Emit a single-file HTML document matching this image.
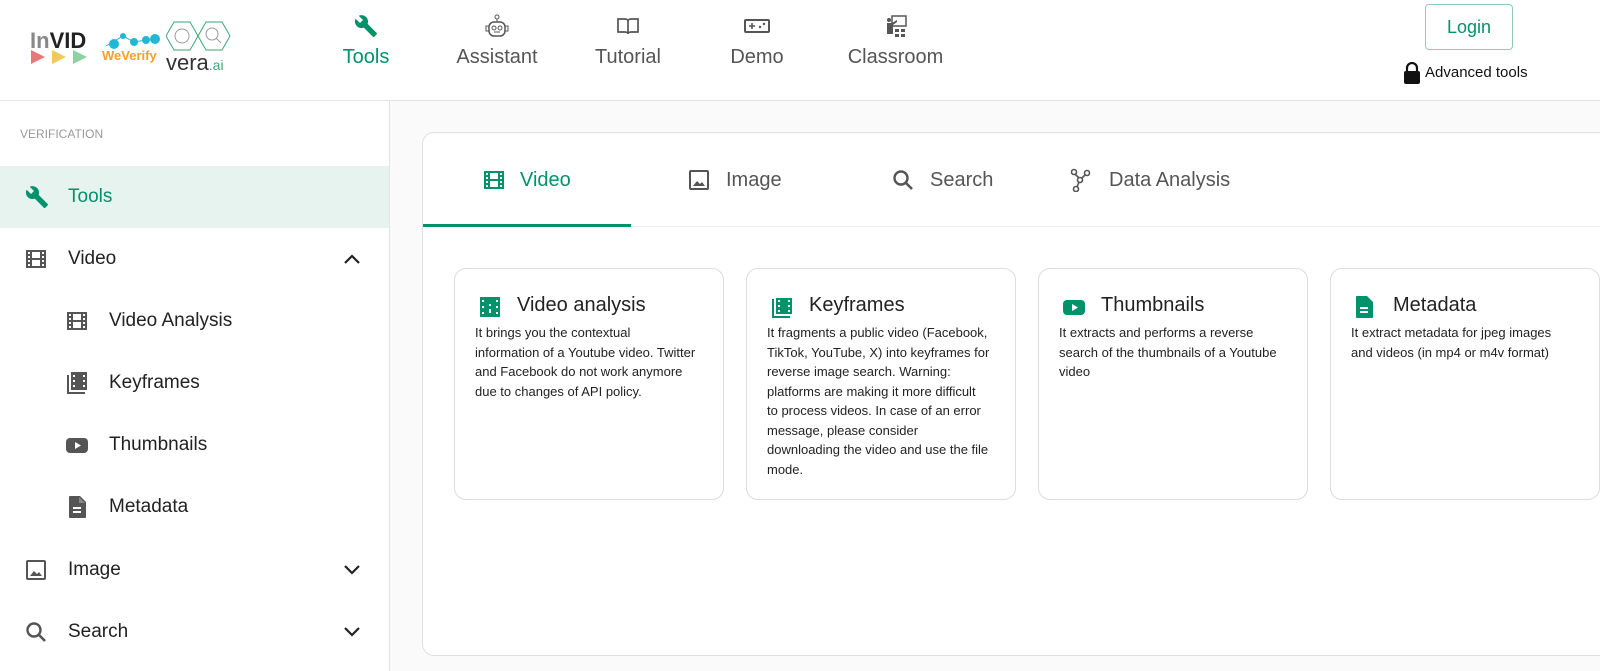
<!DOCTYPE html>
<html><head><meta charset="utf-8"><style>
*{box-sizing:border-box;margin:0;padding:0}
body{width:1600px;height:671px;overflow:hidden;font-family:"Liberation Sans",sans-serif;background:#fafafa;position:relative;color:#222}
.hdr{position:absolute;left:0;top:0;width:1600px;height:101px;background:#fff;border-bottom:1px solid #e3e3e3}
.nav{position:absolute;top:0;text-align:center;font-size:20px;color:#555}
.nav svg{display:block;margin:14px auto 8px}
.side{position:absolute;left:0;top:101px;width:390px;height:570px;background:#fff;border-right:1px solid #e3e3e3}
.row{position:absolute;left:0;width:389px;height:62px;display:flex;align-items:center;font-size:19px;color:#222}
.row svg{position:absolute}
.main{position:absolute;left:422px;top:132px;width:1200px;height:524px;background:#fff;border:1px solid #e0e0e0;border-radius:12px}
.tab{position:absolute;top:0;height:94px;display:flex;align-items:center;font-size:20px;color:#555}
.card{position:absolute;top:135px;width:270px;height:232px;border:1px solid #ddd;border-radius:12px;background:#fff}
.card h3{position:absolute;left:62px;top:25px;font-weight:normal;font-size:20px;color:#222}
.card svg{position:absolute;left:24px;top:27px}
.card p{position:absolute;left:20px;top:54px;white-space:nowrap;font-size:13px;line-height:19.5px;color:#222}
</style></head><body>
<div class="hdr">
 <div style="position:absolute;left:30px;top:28px;font-size:22px;font-weight:bold;color:#222"><span style="color:#888">In</span>VID</div>
 <svg style="position:absolute;left:31px;top:50px" width="60" height="14"><polygon points="0,0 14,7 0,14" fill="#e8787a"/><polygon points="21,0 35,7 21,14" fill="#efc95c"/><polygon points="42,0 56,7 42,14" fill="#8fd0a0"/></svg>
 <svg style="position:absolute;left:102px;top:30px" width="58" height="20"><circle cx="12" cy="14" r="5" fill="#1fb8d6"/><circle cx="21" cy="6" r="3" fill="#1fb8d6"/><circle cx="32" cy="12" r="4" fill="#1fb8d6"/><circle cx="44" cy="10" r="4" fill="#1fb8d6"/><circle cx="53" cy="9" r="5" fill="#1fb8d6"/><path d="M4 16 L21 6 L32 12 L44 10" stroke="#1fb8d6" fill="none"/></svg>
 <div style="position:absolute;left:102px;top:48px;font-size:13px;font-weight:bold;color:#f4a025">WeVerify</div>
 <svg style="position:absolute;left:166px;top:21px" width="68" height="30"><polygon points="8,1 24,1 32,15 24,29 8,29 0,15" fill="none" stroke="#3aa876"/><polygon points="40,1 56,1 64,15 56,29 40,29 32,15" fill="none" stroke="#3aa876"/><circle cx="16" cy="15" r="7" fill="none" stroke="#999"/><circle cx="46" cy="13" r="6" fill="none" stroke="#999"/><line x1="50" y1="17" x2="55" y2="22" stroke="#999"/></svg>
 <div style="position:absolute;left:166px;top:50px;font-size:22px;color:#333">vera<span style="font-size:14px;color:#3aa876">.ai</span></div>
 <div class="nav" style="left:338px;width:56px;color:#00926a"><svg width="24" height="24" viewBox="0 0 24 24"><path fill="#00926a" d="M22.7 19l-9.1-9.1c.9-2.3.4-5-1.5-6.9-2-2-5-2.4-7.4-1.3L9 6 6 9 1.6 4.7C.4 7.1.9 10.1 2.9 12.1c1.9 1.9 4.6 2.4 6.9 1.5l9.1 9.1c.4.4 1 .4 1.4 0l2.3-2.3c.5-.4.5-1.100.1-1.4z"/></svg>Tools</div>
 <div class="nav" style="left:452px;width:90px"><svg width="26" height="24" viewBox="0 0 26 24"><circle cx="13" cy="3" r="2" fill="none" stroke="#555"/><line x1="13" y1="5" x2="13" y2="8" stroke="#555"/><rect x="5" y="8" width="16" height="14" rx="5" fill="none" stroke="#555" stroke-width="1.5"/><circle cx="10" cy="14" r="2" fill="none" stroke="#555"/><circle cx="16" cy="14" r="2" fill="none" stroke="#555"/><path d="M10 18h6" stroke="#555"/><path d="M5 12H2v5h3M21 12h3v5h-3" fill="none" stroke="#555"/></svg>Assistant</div>
 <div class="nav" style="left:592px;width:72px"><svg width="24" height="24" viewBox="0 0 24 24"><path d="M2 5h7c2 0 3 1 3 2v13c0-1-1-2-3-2H2zM22 5h-7c-2 0-3 1-3 2v13c0-1 1-2 3-2h7z" fill="none" stroke="#555" stroke-width="1.7"/></svg>Tutorial</div>
 <div class="nav" style="left:728px;width:58px"><svg width="28" height="24" viewBox="0 0 28 24"><rect x="2" y="6" width="24" height="12" rx="1" fill="none" stroke="#555" stroke-width="2"/><path d="M6 12h6M9 9v6" stroke="#555" stroke-width="1.6"/><circle cx="17" cy="13" r="1.2" fill="#555"/><circle cx="21" cy="10" r="1.2" fill="#555"/></svg>Demo</div>
 <div class="nav" style="left:843px;width:105px"><svg width="24" height="24" viewBox="0 0 24 24"><rect x="8" y="2" width="14" height="10" fill="none" stroke="#555" stroke-width="1.5"/><circle cx="5" cy="6" r="2" fill="#555"/><path d="M3 9h5l5-3v2l-4 3v9H3z" fill="#555"/><rect x="11" y="15" width="4" height="3" fill="#555"/><rect x="17" y="15" width="4" height="3" fill="#555"/><rect x="11" y="20" width="4" height="3" fill="#555"/><rect x="17" y="20" width="4" height="3" fill="#555"/></svg>Classroom</div>
 <div style="position:absolute;left:1425px;top:4px;width:88px;height:46px;border:1px solid #8fcab6;border-radius:4px;color:#00926a;font-size:18px;text-align:center;line-height:44px">Login</div>
 <svg style="position:absolute;left:1403px;top:62px" width="18" height="22" viewBox="0 0 18 22"><path d="M4 9V6a5 5 0 0110 0v3" fill="none" stroke="#111" stroke-width="2.2"/><rect x="1" y="9" width="16" height="13" rx="2" fill="#111"/></svg>
 <div style="position:absolute;left:1425px;top:64px;font-size:15px;color:#111">Advanced tools</div>
</div>
<div class="side">
 <div style="position:absolute;left:20px;top:26px;font-size:12px;color:#999">VERIFICATION</div>
 <div class="row" style="top:65px;background:#e7f3ef;color:#00926a"><svg style="left:25px" width="24" height="24" viewBox="0 0 24 24"><path fill="#00926a" d="M22.7 19l-9.1-9.1c.9-2.3.4-5-1.5-6.9-2-2-5-2.4-7.4-1.3L9 6 6 9 1.6 4.7C.4 7.1.9 10.1 2.9 12.1c1.9 1.9 4.6 2.4 6.9 1.5l9.1 9.1c.4.4 1 .4 1.4 0l2.3-2.3c.5-.4.5-1.1.1-1.4z"/></svg><span style="margin-left:68px">Tools</span></div>
 <div class="row" style="top:127px"><svg style="left:25px" width="22" height="22" viewBox="0 0 22 22"><rect x="1" y="2" width="20" height="18" fill="#555"/><g fill="#fff"><rect x="3" y="4" width="2" height="2"/><rect x="3" y="8" width="2" height="2"/><rect x="3" y="12" width="2" height="2"/><rect x="3" y="16" width="2" height="2"/><rect x="17" y="4" width="2" height="2"/><rect x="17" y="8" width="2" height="2"/><rect x="17" y="12" width="2" height="2"/><rect x="17" y="16" width="2" height="2"/><rect x="7" y="4" width="8" height="6"/><rect x="7" y="12" width="8" height="6"/></g></svg><span style="margin-left:68px">Video</span><svg style="left:343px" width="18" height="12"><path d="M2 10l7-7 7 7" fill="none" stroke="#222" stroke-width="2.2"/></svg></div>
 <div class="row" style="top:189px"><svg style="left:66px" width="22" height="22" viewBox="0 0 22 22"><rect x="1" y="2" width="20" height="18" fill="#555"/><g fill="#fff"><rect x="3" y="4" width="2" height="2"/><rect x="3" y="8" width="2" height="2"/><rect x="3" y="12" width="2" height="2"/><rect x="3" y="16" width="2" height="2"/><rect x="17" y="4" width="2" height="2"/><rect x="17" y="8" width="2" height="2"/><rect x="17" y="12" width="2" height="2"/><rect x="17" y="16" width="2" height="2"/><rect x="7" y="4" width="8" height="6"/><rect x="7" y="12" width="8" height="6"/></g></svg><span style="margin-left:109px">Video Analysis</span></div>
 <div class="row" style="top:251px"><svg style="left:66px" width="22" height="22" viewBox="0 0 22 22"><path d="M1 3h2v17h16v2H1z" fill="#555"/><rect x="5" y="0" width="16" height="18" fill="#555"/><g fill="#fff"><rect x="7" y="3" width="2" height="2"/><rect x="7" y="8" width="2" height="2"/><rect x="7" y="13" width="2" height="2"/><rect x="17" y="3" width="2" height="2"/><rect x="17" y="8" width="2" height="2"/><rect x="17" y="13" width="2" height="2"/></g></svg><span style="margin-left:109px">Keyframes</span></div>
 <div class="row" style="top:313px"><svg style="left:66px" width="22" height="22" viewBox="0 0 22 22"><rect x="0" y="4" width="22" height="15" rx="4" fill="#555"/><path d="M9 8l6 3.5-6 3.5z" fill="#fff"/></svg><span style="margin-left:109px">Thumbnails</span></div>
 <div class="row" style="top:375px"><svg style="left:68px" width="18" height="22" viewBox="0 0 18 22"><path d="M2 0h10l6 6v15a1 1 0 01-1 1H2a1 1 0 01-1-1V1a1 1 0 011-1z" fill="#555"/><path d="M11 1v6h6" fill="#888"/><path d="M5 12h8M5 16h8" stroke="#fff" stroke-width="2"/></svg><span style="margin-left:109px">Metadata</span></div>
 <div class="row" style="top:438px"><svg style="left:25px" width="22" height="22" viewBox="0 0 22 22"><rect x="2" y="2" width="18" height="18" rx="1" fill="none" stroke="#555" stroke-width="2"/><path d="M5 17l4-5 3 3 2-2 3 4z" fill="#555"/></svg><span style="margin-left:68px">Image</span><svg style="left:343px" width="18" height="12"><path d="M2 2l7 7 7-7" fill="none" stroke="#222" stroke-width="2.2"/></svg></div>
 <div class="row" style="top:500px"><svg style="left:25px" width="22" height="22" viewBox="0 0 22 22"><circle cx="9" cy="9" r="6.5" fill="none" stroke="#555" stroke-width="2.4"/><path d="M14 14l6 6" stroke="#555" stroke-width="2.6"/></svg><span style="margin-left:68px">Search</span><svg style="left:343px" width="18" height="12"><path d="M2 2l7 7 7-7" fill="none" stroke="#222" stroke-width="2.2"/></svg></div>
</div>
<div class="main">
 <div style="position:absolute;left:0;top:93px;width:1200px;height:1px;background:#eee"></div>
 <div style="position:absolute;left:0;top:91px;width:208px;height:3px;background:#00926a"></div>
 <div class="tab" style="left:60px;color:#00926a"><svg width="22" height="22" viewBox="0 0 22 22"><rect x="1" y="2" width="20" height="18" fill="#00926a"/><g fill="#fff"><rect x="3" y="4" width="2" height="2"/><rect x="3" y="8" width="2" height="2"/><rect x="3" y="12" width="2" height="2"/><rect x="3" y="16" width="2" height="2"/><rect x="17" y="4" width="2" height="2"/><rect x="17" y="8" width="2" height="2"/><rect x="17" y="12" width="2" height="2"/><rect x="17" y="16" width="2" height="2"/><rect x="7" y="4" width="8" height="6"/><rect x="7" y="12" width="8" height="6"/></g></svg><span style="margin-left:15px">Video</span></div>
 <div class="tab" style="left:265px"><svg width="22" height="22" viewBox="0 0 22 22"><rect x="2" y="2" width="18" height="18" rx="1" fill="none" stroke="#555" stroke-width="2"/><path d="M5 17l4-5 3 3 2-2 3 4z" fill="#555"/></svg><span style="margin-left:16px">Image</span></div>
 <div class="tab" style="left:469px"><svg width="22" height="22" viewBox="0 0 22 22"><circle cx="9" cy="9" r="6.5" fill="none" stroke="#555" stroke-width="2.4"/><path d="M14 14l6 6" stroke="#555" stroke-width="2.6"/></svg><span style="margin-left:16px">Search</span></div>
 <div class="tab" style="left:647px"><svg width="22" height="24" viewBox="0 0 22 24"><circle cx="4" cy="4" r="2.5" fill="none" stroke="#555" stroke-width="1.6"/><circle cx="17" cy="5" r="2.5" fill="none" stroke="#555" stroke-width="1.6"/><circle cx="10" cy="12" r="2.5" fill="none" stroke="#555" stroke-width="1.6"/><circle cx="6" cy="21" r="2.5" fill="none" stroke="#555" stroke-width="1.6"/><path d="M5 6l4 4M15 7l-3 3M9 14l-2 5" stroke="#555" stroke-width="1.6"/></svg><span style="margin-left:17px">Data Analysis</span></div>
 <div class="card" style="left:31px"><svg width="22" height="22" viewBox="0 0 22 22"><rect x="1" y="1" width="20" height="20" fill="#00926a"/><g fill="#fff"><rect x="3" y="4" width="2" height="2"/><rect x="3" y="10" width="2" height="2"/><rect x="3" y="16" width="2" height="2"/><rect x="17" y="4" width="2" height="2"/><rect x="17" y="10" width="2" height="2"/><rect x="17" y="16" width="2" height="2"/><rect x="10" y="8" width="2" height="2"/><rect x="10" y="13" width="2" height="4"/></g></svg><h3>Video analysis</h3><p>It brings you the contextual<br>information of a Youtube video. Twitter<br>and Facebook do not work anymore<br>due to changes of API policy.</p></div>
 <div class="card" style="left:323px"><svg width="22" height="22" viewBox="0 0 22 22"><path d="M1 3h2v17h16v2H1z" fill="#00926a"/><rect x="5" y="2" width="16" height="16" fill="#00926a"/><g fill="#fff"><rect x="7" y="4" width="2" height="2"/><rect x="7" y="9" width="2" height="2"/><rect x="7" y="14" width="2" height="2"/><rect x="17" y="4" width="2" height="2"/><rect x="17" y="9" width="2" height="2"/><rect x="17" y="14" width="2" height="2"/></g></svg><h3>Keyframes</h3><p>It fragments a public video (Facebook,<br>TikTok, YouTube, X) into keyframes for<br>reverse image search. Warning:<br>platforms are making it more difficult<br>to process videos. In case of an error<br>message, please consider<br>downloading the video and use the file<br>mode.</p></div>
 <div class="card" style="left:615px"><svg width="22" height="22" viewBox="0 0 22 22"><rect x="0" y="4" width="22" height="15" rx="4" fill="#00926a"/><path d="M9 8l6 3.5-6 3.5z" fill="#fff"/></svg><h3>Thumbnails</h3><p>It extracts and performs a reverse<br>search of the thumbnails of a Youtube<br>video</p></div>
 <div class="card" style="left:907px"><svg width="18" height="22" viewBox="0 0 18 22"><path d="M2 0h10l6 6v15a1 1 0 01-1 1H2a1 1 0 01-1-1V1a1 1 0 011-1z" fill="#00926a"/><path d="M5 12h8M5 16h8" stroke="#fff" stroke-width="2"/></svg><h3>Metadata</h3><p>It extract metadata for jpeg images<br>and videos (in mp4 or m4v format)</p></div>
</div>
</body></html>
